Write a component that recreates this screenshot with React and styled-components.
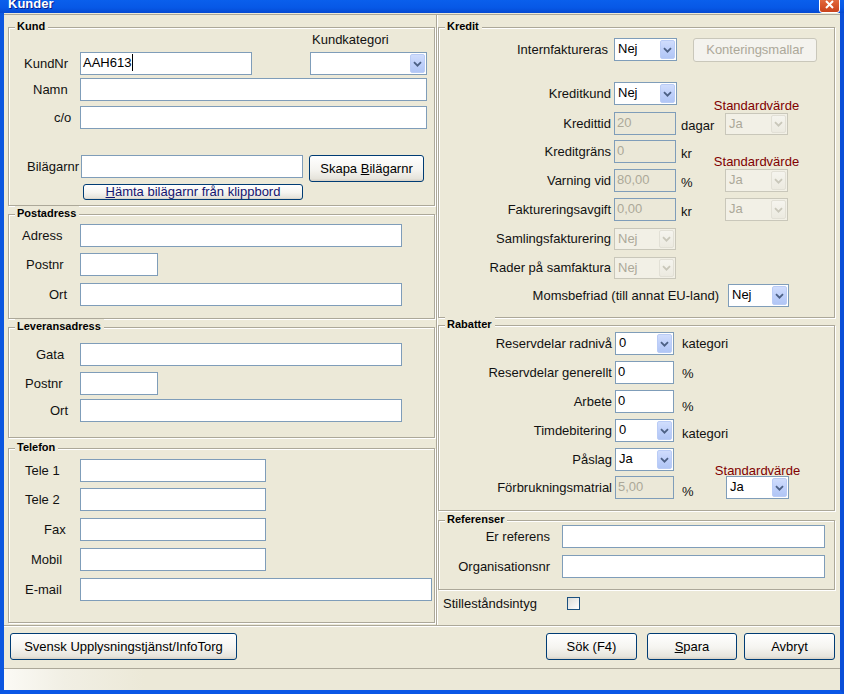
import React from 'react';
import styled, { createGlobalStyle } from 'styled-components';

const GlobalStyle = createGlobalStyle`
  html, body { margin: 0; padding: 0; background: #ECE9D8; }
  body { font-family: "Liberation Sans", Arial, sans-serif; font-size: 13px; color: #000; }
`;

const Window = styled.div`
  width: 844px; height: 694px; display: flex; flex-direction: column;
  background: #ECE9D8; overflow: hidden;
`;
const TitleBar = styled.div`
  height: 13px; flex: none; display: flex; justify-content: space-between; align-items: flex-start;
  padding: 0 4px 0 8px; overflow: hidden;
  background: linear-gradient(180deg, #0A5FEC 0%, #0758E6 60%, #0449D2 100%);
`;
const TitleText = styled.span`
  margin-top: -3px; font-weight: bold; font-size: 13px; line-height: 13px; color: #fff;
  text-shadow: 1px 1px 0 #0A1E8C;
`;
const CloseBtn = styled.div`
  width: 21px; height: 21px; margin-top: -8px; box-sizing: border-box;
  border: 1px solid #fff; border-radius: 3px;
  background: linear-gradient(180deg, #E9865F 0%, #DC5B30 55%, #C9431D 100%);
  display: flex; align-items: flex-end; justify-content: center; padding-bottom: 3px;
`;
const Frame = styled.div`
  flex: 1; display: flex; flex-direction: column; min-height: 0;
  border: 4px solid #0A57E6; border-top: 0;
  border-left-color: #0B56E0; border-right-color: #0A4FD8;
`;
const Columns = styled.div`
  height: 611px; flex: none; display: flex; margin-top: 1px;
  border-top: 1px solid #ACA899; box-sizing: border-box;
`;
const LeftCol = styled.div`
  width: 433px; flex: none; box-sizing: border-box; padding-left: 4px;
  border-right: 1px solid #ACA899; box-shadow: 1px 0 0 #fff;
`;
const RightCol = styled.div`
  flex: 1; box-sizing: border-box; padding-left: 1px;
`;
const Group = styled.div`
  position: relative; box-sizing: border-box;
  width: ${p => p.$w}px; height: ${p => p.$h}px; margin-top: ${p => p.$mt}px;
  border: 1px solid #ACA899; box-shadow: inset 1px 1px 0 #fff, 1px 1px 0 #fff;
  display: flex; flex-direction: column;
`;
const GroupTitle = styled.span`
  position: absolute; top: -9px; left: 6px; padding: 0 3px 0 2px;
  background: #ECE9D8; font-weight: bold; font-size: 11px; line-height: 14px; color: #000;
`;
const Row = styled.div`
  display: flex; align-items: ${p => (p.$top ? 'flex-start' : 'center')};
  justify-content: ${p => (p.$end ? 'flex-end' : 'flex-start')};
  margin-top: ${p => p.$mt || 0}px; height: ${p => p.$h || 23}px;
  padding-right: ${p => p.$pr || 0}px; flex: none;
`;
const Label = styled.span`
  flex: none; box-sizing: border-box; width: ${p => p.$w}px;
  padding-left: ${p => p.$pl || 0}px; margin-right: ${p => p.$mr || 0}px;
  text-align: ${p => (p.$right ? 'right' : 'left')};
  white-space: nowrap; line-height: ${p => p.$lh || 16}px; color: #111;
`;
const TextBox = styled.div`
  flex: none; box-sizing: border-box; width: ${p => p.$w}px; height: ${p => p.$h || 23}px;
  margin-left: ${p => p.$ml || 0}px;
  border: 1px solid #7F9DB9;
  background: ${p => (p.$disabled ? '#EBE8D8' : '#fff')};
  color: ${p => (p.$disabled ? '#ACA899' : '#000')};
  padding: 1px 2px; line-height: 17px; white-space: nowrap; overflow: hidden;
`;
const Caret = styled.span`
  display: inline-block; width: 1px; height: 17px; background: #000; vertical-align: top; margin-left: 1px;
`;
const ComboBox = styled.div`
  flex: none; box-sizing: border-box; width: ${p => p.$w}px; height: ${p => p.$h || 23}px;
  margin-left: ${p => p.$ml || 0}px; display: flex; padding: 1px;
  border: 1px solid ${p => (p.$disabled ? '#C9C7BA' : '#7F9DB9')};
  background: ${p => (p.$disabled ? '#F2F0E6' : '#fff')};
`;
const ComboValue = styled.span`
  flex: 1; padding-left: 2px; line-height: 17px; white-space: nowrap; overflow: hidden;
  color: ${p => (p.$disabled ? '#ACA899' : '#000')};
`;
const ComboArrow = styled.span`
  width: 15px; flex: none; box-sizing: border-box; border-radius: 2px;
  display: flex; align-items: center; justify-content: center;
  border: 1px solid ${p => (p.$disabled ? '#E2E0D6' : '#BACCF6')};
  background: ${p => (p.$disabled
    ? 'linear-gradient(180deg, #F5F4EE, #ECEAE0)'
    : 'linear-gradient(180deg, #D0DDFC 0%, #BFD0FA 50%, #B1C6F5 100%)')};
`;
const Btn = styled.div`
  flex: none; box-sizing: border-box; width: ${p => p.$w}px; height: ${p => p.$h || 27}px;
  margin-left: ${p => p.$ml || 0}px;
  border: 1px solid ${p => (p.$disabled ? '#C9C7BA' : '#003C74')}; border-radius: 3px;
  background: ${p => (p.$disabled ? '#F4F3EE' : 'linear-gradient(180deg, #FFFFFF 0%, #F5F4F0 55%, #E6E4DC 90%, #D6D0C5 100%)')};
  color: ${p => (p.$disabled ? '#ACA899' : p.$color || '#000')};
  display: flex; align-items: center; justify-content: center;
  white-space: nowrap; line-height: 14px;
`;
const Unit = styled.span`
  flex: none; box-sizing: border-box; width: ${p => p.$w}px; padding-left: ${p => p.$pl || 0}px;
  margin-top: ${p => p.$mt || 0}px; white-space: nowrap; color: #111;
`;
const StdCell = styled.span`
  flex: none; width: 63px; display: flex; justify-content: center; white-space: nowrap;
  align-self: flex-end; margin-bottom: ${p => p.$mb}px; color: #800000; line-height: 15px;
`;
const CheckBox = styled.span`
  flex: none; width: 13px; height: 13px; box-sizing: border-box;
  border: 1px solid #1C5180; background: linear-gradient(135deg, #DCDCD7, #FFFFFF);
`;
const ButtonBar = styled.div`
  height: 43px; flex: none; box-sizing: border-box; display: flex; align-items: flex-start;
  padding: 7px 5px 0 6px; border-top: 1px solid #ACA899; box-shadow: inset 0 1px 0 #fff;
`;
const Spacer = styled.div`flex: 1;`;
const StatusBar = styled.div`
  flex: 1; border-top: 1px solid #ACA899;
  background: linear-gradient(90deg, #FBFAF5 0%, #F1EFE4 60px, #ECE9D8 140px);
`;
const U = styled.span`text-decoration: underline;`;

const Chevron = ({ disabled }) => (
  <svg width="9" height="6" viewBox="0 0 9 6">
    <path d="M1 1.2 4.5 4.7 8 1.2" fill="none" stroke={disabled ? '#C9C7BA' : '#4D6185'} strokeWidth="1.8" />
  </svg>
);

const Combo = ({ w, value, disabled, ml, h }) => (
  <ComboBox $w={w} $ml={ml} $h={h} $disabled={disabled}>
    <ComboValue $disabled={disabled}>{value}</ComboValue>
    <ComboArrow $disabled={disabled}><Chevron disabled={disabled} /></ComboArrow>
  </ComboBox>
);

const Field = ({ label, pl, w, mt }) => (
  <Row $mt={mt}>
    <Label $w={71} $pl={pl}>{label}</Label>
    <TextBox $w={w} />
  </Row>
);

const CreditRow = ({ label, mt, children, lw = 172 }) => (
  <Row $mt={mt}>
    <Label $w={lw} $right $mr={614 - 439 - lw}>{label}</Label>
    {children}
  </Row>
);

const RebateRow = ({ label, mt, children }) => (
  <Row $mt={mt}>
    <Label $w={173} $right $mr={3}>{label}</Label>
    {children}
  </Row>
);

export default function App() {
  return (
    <Window>
      <GlobalStyle />
      <TitleBar>
        <TitleText>Kunder</TitleText>
        <CloseBtn>
          <svg width="9" height="9" viewBox="0 0 9 9">
            <path d="M1 1 8 8M8 1 1 8" stroke="#fff" strokeWidth="2" />
          </svg>
        </CloseBtn>
      </TitleBar>
      <Frame>
        <Columns>
          <LeftCol>
            <Group $w={427} $h={179} $mt={12}>
              <GroupTitle>Kund</GroupTitle>
              <Row $mt={4} $h={16}>
                <Label $w={390} $pl={303}>Kundkategori</Label>
              </Row>
              <Row $mt={4}>
                <Label $w={71} $pl={15}>KundNr</Label>
                <TextBox $w={172}>AAH613<Caret /></TextBox>
                <Combo w={117} ml={58} value="" />
              </Row>
              <Field label="Namn" pl={24} w={347} mt={3} />
              <Field label="c/o" pl={45} w={347} mt={5} />
              <Row $mt={26} $h={27} $top>
                <Label $w={72} $pl={18} $lh={23}>Bilägarnr</Label>
                <TextBox $w={222} />
                <Btn $w={115} $ml={6}>Skapa&nbsp;<U>B</U>ilägarnr</Btn>
              </Row>
              <Row $mt={2} $h={16}>
                <Btn $w={220} $h={16} $ml={74} $color="#141470"><U>H</U>ämta bilägarnr från klippbord</Btn>
              </Row>
            </Group>

            <Group $w={427} $h={105} $mt={8}>
              <GroupTitle>Postadress</GroupTitle>
              <Field label="Adress" pl={13} w={322} mt={9} />
              <Field label="Postnr" pl={17} w={78} mt={6} />
              <Field label="Ort" pl={40} w={322} mt={7} />
            </Group>

            <Group $w={427} $h={111} $mt={8}>
              <GroupTitle>Leveransadress</GroupTitle>
              <Field label="Gata" pl={27} w={322} mt={15} />
              <Field label="Postnr" pl={16} w={78} mt={6} />
              <Field label="Ort" pl={41} w={322} mt={4} />
            </Group>

            <Group $w={427} $h={175} $mt={10}>
              <GroupTitle>Telefon</GroupTitle>
              <Field label="Tele 1" pl={16} w={186} mt={10} />
              <Field label="Tele 2" pl={16} w={186} mt={6} />
              <Field label="Fax" pl={35} w={186} mt={7} />
              <Field label="Mobil" pl={22} w={186} mt={7} />
              <Field label="E-mail" pl={16} w={352} mt={7} />
            </Group>
          </LeftCol>

          <RightCol>
            <Group $w={397} $h={291} $mt={12}>
              <GroupTitle>Kredit</GroupTitle>
              <CreditRow label="Internfaktureras" mt={10} lw={169}>
                <Combo w={63} value="Nej" />
                <Btn $w={124} $h={24} $ml={16} $disabled>Konteringsmallar</Btn>
              </CreditRow>
              <CreditRow label="Kreditkund" mt={21}>
                <Combo w={63} value="Nej" />
                <Unit $w={48} />
                <StdCell $mb={-8}>Standardvärde</StdCell>
              </CreditRow>
              <CreditRow label="Kredittid" mt={7}>
                <TextBox $w={62} $disabled>20</TextBox>
                <Unit $w={49} $pl={5} $mt={4}>dagar</Unit>
                <Combo w={63} h={22} value="Ja" disabled />
              </CreditRow>
              <CreditRow label="Kreditgräns" mt={5}>
                <TextBox $w={62} $disabled>0</TextBox>
                <Unit $w={49} $pl={5} $mt={4}>kr</Unit>
                <StdCell $mb={-6}>Standardvärde</StdCell>
              </CreditRow>
              <CreditRow label="Varning vid" mt={6}>
                <TextBox $w={62} $disabled>80,00</TextBox>
                <Unit $w={49} $pl={5} $mt={4}>%</Unit>
                <Combo w={63} value="Ja" disabled />
              </CreditRow>
              <CreditRow label="Faktureringsavgift" mt={6}>
                <TextBox $w={62} $disabled>0,00</TextBox>
                <Unit $w={49} $pl={5} $mt={4}>kr</Unit>
                <Combo w={63} value="Ja" disabled />
              </CreditRow>
              <CreditRow label="Samlingsfakturering" mt={6}>
                <Combo w={62} h={22} value="Nej" disabled />
              </CreditRow>
              <CreditRow label="Rader på samfaktura" mt={6}>
                <Combo w={62} h={22} value="Nej" disabled />
              </CreditRow>
              <Row $mt={5} $end $pr={45}>
                <Label $w={190} $right $mr={9}>Momsbefriad (till annat EU-land)</Label>
                <Combo w={61} value="Nej" />
              </Row>
            </Group>

            <Group $w={397} $h={186} $mt={7}>
              <GroupTitle>Rabatter</GroupTitle>
              <RebateRow label="Reservdelar radnivå" mt={6}>
                <Combo w={59} value="0" />
                <Unit $w={52} $pl={8}>kategori</Unit>
              </RebateRow>
              <RebateRow label="Reservdelar generellt" mt={6}>
                <TextBox $w={59}>0</TextBox>
                <Unit $w={52} $pl={8} $mt={2}>%</Unit>
              </RebateRow>
              <RebateRow label="Arbete" mt={6}>
                <TextBox $w={59}>0</TextBox>
                <Unit $w={52} $pl={8} $mt={10}>%</Unit>
              </RebateRow>
              <RebateRow label="Timdebitering" mt={6}>
                <Combo w={59} value="0" />
                <Unit $w={52} $pl={8} $mt={6}>kategori</Unit>
              </RebateRow>
              <RebateRow label="Påslag" mt={6}>
                <Combo w={59} value="Ja" />
                <Unit $w={52} />
                <StdCell $mb={-7}>Standardvärde</StdCell>
              </RebateRow>
              <RebateRow label="Förbrukningsmatrial" mt={5}>
                <TextBox $w={59} $disabled>5,00</TextBox>
                <Unit $w={52} $pl={8} $mt={8}>%</Unit>
                <Combo w={63} value="Ja" />
              </RebateRow>
            </Group>

            <Group $w={397} $h={70} $mt={9}>
              <GroupTitle>Referenser</GroupTitle>
              <Row $mt={4}>
                <Label $w={111} $right $mr={12}>Er referens</Label>
                <TextBox $w={263} />
              </Row>
              <Row $mt={7}>
                <Label $w={111} $right $mr={12}>Organisationsnr</Label>
                <TextBox $w={263} />
              </Row>
            </Group>

            <Row $mt={7} $h={13}>
              <Label $w={129} $pl={5}>Stilleståndsintyg</Label>
              <CheckBox />
            </Row>
          </RightCol>
        </Columns>

        <ButtonBar>
          <Btn $w={227}>Svensk Upplysningstjänst/InfoTorg</Btn>
          <Spacer />
          <Btn $w={91}>Sök (F4)</Btn>
          <Btn $w={90} $ml={10}><U>S</U>para</Btn>
          <Btn $w={91} $ml={7}>Avbryt</Btn>
        </ButtonBar>
        <StatusBar />
      </Frame>
    </Window>
  );
}
